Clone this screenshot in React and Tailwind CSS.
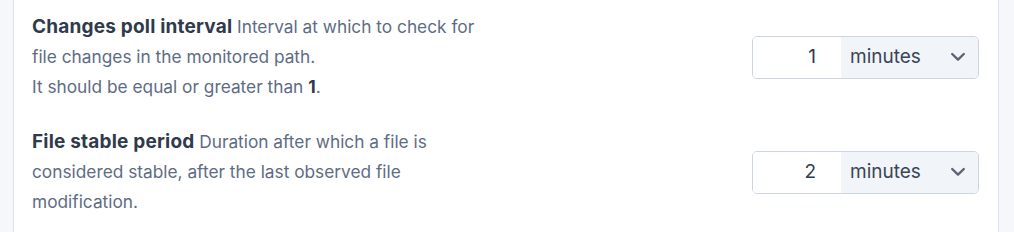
import React from "react";

function Chevron() {
  return (
    <svg width="16" height="16" viewBox="0 0 16 16" fill="none" stroke="#5b6472" strokeWidth="2.4" strokeLinecap="round" strokeLinejoin="round">
      <path d="M2.2 5L8 10.6 13.8 5" />
    </svg>
  );
}

function Row({ title, lines, value }) {
  return (
    <div className="flex items-center justify-between">
      <div className="text-[17.3px] leading-[30px] text-[#5d6c84]">
        {lines.map((l, i) => (
          <div key={i}>
            {i === 0 && <span className="text-[19px] font-bold tracking-[0.2px] text-[#2f3a4b]">{title} </span>}
            {l}
          </div>
        ))}
      </div>
      <div className="flex h-[43px] w-[227px] overflow-hidden rounded-[5px] border border-[#cdd5e0]">
        <div className="flex w-[88px] items-center justify-end bg-white pr-[25px] text-[19px] text-[#2f3a4b]">{value}</div>
        <div className="flex flex-1 items-center justify-between bg-[#f1f4f9] pl-[9px] pr-[12px] text-[19px] text-[#3a4556]">
          <span>minutes</span>
          <Chevron />
        </div>
      </div>
    </div>
  );
}

export default function App() {
  return (
    <div className="flex h-[232px] w-[1014px] bg-[#f5f7fa]" style={{ fontFamily: "Inter, 'Noto Sans', sans-serif" }}>
      <div className="ml-[13px] flex w-[986px] flex-col gap-[25px] border-x border-[#dde3ec] bg-white pl-[18px] pr-[19px] pt-[12px]">
        <Row
          title="Changes poll interval"
          lines={[
            "Interval at which to check for",
            "file changes in the monitored path.",
            <span key="x">It should be equal or greater than <span className="font-bold text-[#2f3a4b]">1</span>.</span>,
          ]}
          value="1"
        />
        <Row
          title="File stable period"
          lines={[
            "Duration after which a file is",
            "considered stable, after the last observed file",
            "modification.",
          ]}
          value="2"
        />
      </div>
    </div>
  );
}
